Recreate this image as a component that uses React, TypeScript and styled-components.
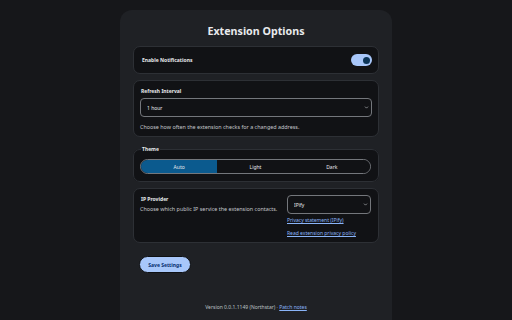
import React, { useState } from "react"
import styled, { createGlobalStyle, css } from "styled-components"
import { ChevronDown } from "lucide-react"

const GlobalStyle = createGlobalStyle`
	html, body {
		margin: 0;
		padding: 0;
		height: 100%;
		overflow: hidden;
		background: #16171a;
		font-family: "Noto Sans", "Liberation Sans", sans-serif;
		color: #e3e3e3;
	}
`

const Page = styled.div`
	display: flex;
	justify-content: center;
	padding-top: 10px;
`

const Panel = styled.main`
	width: 272px;
	box-sizing: border-box;
	min-height: 320px;
	padding: 0 13px;
	background: #1f2125;
	border-radius: 12px 12px 0 0;
	display: flex;
	flex-direction: column;
`

const Title = styled.h1`
	margin: 12px 0 6px;
	font-size: 10.7px;
	line-height: 18px;
	font-weight: 700;
	text-align: center;
	color: #e8eaed;
`

const Stack = styled.div`
	display: flex;
	flex-direction: column;
	gap: 6px;
`

const cardBase = css`
	background: #111215;
	border: 1px solid #2d3035;
	border-radius: 7px;
	box-sizing: border-box;
`

const ToggleCard = styled.div`
	${cardBase}
	height: 28px;
	padding: 0 6px 0 7px;
	display: flex;
	align-items: center;
	justify-content: space-between;
`

const Card = styled.div`
	${cardBase}
	padding: 7px 6px 5px 6px;
	display: flex;
	flex-direction: column;
`

const Fieldset = styled.fieldset`
	${cardBase}
	margin: 3px 0 0;
	padding: 6px 7px 7px 6px;
	min-width: 0;
`

const Legend = styled.legend`
	padding: 0 1px;
	margin-left: 1px;
	font-size: 5px;
	line-height: 7px;
	font-weight: 700;
	color: #e8eaed;
`

const Label = styled.div`
	font-size: 5px;
	line-height: 7px;
	font-weight: 700;
	color: #e8eaed;
	padding-left: 1px;
`

const Help = styled.div<{ $top?: number }>`
	font-size: 5.4px;
	line-height: 7px;
	color: #c4c7cc;
	margin-top: ${p => p.$top ?? 0}px;
`

const Toggle = styled.button<{ $on: boolean }>`
	width: 21px;
	height: 12px;
	border: none;
	padding: 0 2.5px;
	border-radius: 6px;
	background: ${p => (p.$on ? "#a8c7fa" : "#5f6368")};
	display: flex;
	align-items: center;
	justify-content: ${p => (p.$on ? "flex-end" : "flex-start")};
	cursor: pointer;
`

const Knob = styled.span`
	width: 7px;
	height: 7px;
	border-radius: 50%;
	background: #0c3558;
`

const SelectWrap = styled.div<{ $top?: number }>`
	position: relative;
	margin-top: ${p => p.$top ?? 0}px;
`

const Select = styled.select`
	display: block;
	appearance: none;
	width: 100%;
	height: 19px;
	box-sizing: border-box;
	padding: 0 0 0 6px;
	border: 1px solid #74777c;
	border-radius: 4px;
	background: #111215;
	color: #e8eaed;
	font-family: inherit;
	font-size: 5px;
	outline: none;
`

const Chevron = styled(ChevronDown)`
	position: absolute;
	right: 3px;
	top: 7px;
	width: 5px;
	height: 5px;
	color: #c4c7cc;
	pointer-events: none;
`

const Segmented = styled.div`
	display: grid;
	grid-template-columns: repeat(3, 1fr);
	height: 15px;
	border: 1px solid #74777c;
	border-radius: 8px;
	overflow: hidden;
	box-sizing: border-box;
`

const Segment = styled.button<{ $active: boolean }>`
	border: none;
	padding: 0;
	font-family: inherit;
	font-size: 5px;
	color: #e8eaed;
	background: ${p => (p.$active ? "#0b5a8e" : "#111215")};
	cursor: pointer;
`

const ProviderRow = styled.div`
	${cardBase}
	padding: 6px 7px 5px 6px;
	display: flex;
	justify-content: space-between;
	align-items: flex-start;
`

const ProviderInfo = styled.div`
	display: flex;
	flex-direction: column;
	padding-top: 1px;
`

const ProviderSide = styled.div`
	width: 84px;
	display: flex;
	flex-direction: column;
`

const Link = styled.a<{ $top?: number }>`
	font-size: 5px;
	line-height: 7px;
	color: #8ab4f8;
	text-decoration: underline;
	margin-top: ${p => p.$top ?? 0}px;
	white-space: nowrap;
`

const SaveButton = styled.button`
	align-self: flex-start;
	margin: 13px 0 0 6px;
	height: 17px;
	width: 52px;
	border: 1px solid #0e1013;
	border-radius: 9px;
	background: #a8c7fa;
	color: #062e6f;
	font-family: inherit;
	font-size: 5px;
	font-weight: 700;
	padding: 0;
	cursor: pointer;
`

const Footer = styled.footer`
	margin-top: 31px;
	text-align: center;
	font-size: 5px;
	line-height: 7px;
	color: #bdc1c6;
`

export default function App() {
	const [notify, setNotify] = useState(true)
	const [theme, setTheme] = useState("Auto")

	return (
		<>
			<GlobalStyle />
			<Page>
				<Panel>
					<Title>Extension Options</Title>
					<Stack>
						<ToggleCard>
							<Label>Enable Notifications</Label>
							<Toggle $on={notify} onClick={() => setNotify(!notify)}>
								<Knob />
							</Toggle>
						</ToggleCard>

						<Card>
							<Label>Refresh Interval</Label>
							<SelectWrap $top={3}>
								<Select defaultValue="60">
									<option value="15">15 minutes</option>
									<option value="30">30 minutes</option>
									<option value="60">1 hour</option>
								</Select>
								<Chevron strokeWidth={3} />
							</SelectWrap>
							<Help $top={7}>Choose how often the extension checks for a changed address.</Help>
						</Card>

						<Fieldset>
							<Legend>Theme</Legend>
							<Segmented>
								{["Auto", "Light", "Dark"].map(t => (
									<Segment key={t} $active={theme === t} onClick={() => setTheme(t)}>
										{t}
									</Segment>
								))}
							</Segmented>
						</Fieldset>

						<ProviderRow>
							<ProviderInfo>
								<Label>IP Provider</Label>
								<Help $top={3}>Choose which public IP service the extension contacts.</Help>
							</ProviderInfo>
							<ProviderSide>
								<SelectWrap>
									<Select defaultValue="ipify">
										<option value="ipify">IPify</option>
										<option value="icanhazip">icanhazip</option>
									</Select>
									<Chevron strokeWidth={3} />
								</SelectWrap>
								<Link href="#" $top={3}>Privacy statement (IPify)</Link>
								<Link href="#" $top={6}>Read extension privacy policy</Link>
							</ProviderSide>
						</ProviderRow>
					</Stack>

					<SaveButton>Save Settings</SaveButton>

					<Footer>
						Version 0.0.1.1149 (Northstar) · <Link href="#">Patch notes</Link>
					</Footer>
				</Panel>
			</Page>
		</>
	)
}
